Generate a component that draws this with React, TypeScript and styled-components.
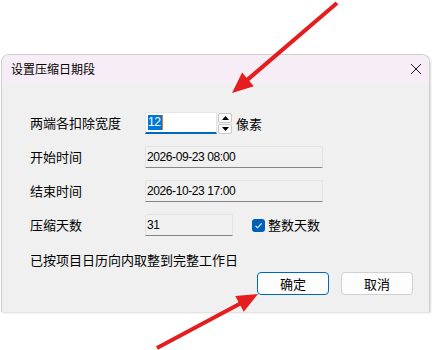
import React from 'react'
import styled, { createGlobalStyle } from 'styled-components'

const GlobalStyle = createGlobalStyle`
  html, body {
    margin: 0;
    padding: 0;
    background: #ffffff;
  }
  body {
    font-family: "Noto Sans CJK SC", "Liberation Sans", sans-serif;
    color: #000;
  }
`

const Page = styled.div`
  position: relative;
  width: 432px;
  height: 350px;
  padding-top: 54px;
  box-sizing: border-box;
  overflow: hidden;
`

const Dialog = styled.div`
  margin-left: 1px;
  width: 429px;
  border: 1px solid #cfcfcf;
  border-bottom: none;
  border-radius: 8px 8px 0 0;
  box-sizing: border-box;
  overflow: hidden;
  box-shadow: 1px 1px 2px rgba(0, 0, 0, 0.15);
`

const TitleBar = styled.div`
  height: 29px;
  background: #f6edf6;
  display: flex;
  align-items: center;
  justify-content: space-between;
  padding: 0 7px 0 9px;
  font-size: 12px;
  line-height: 16px;
  margin-top: -1px;
`

const Body = styled.div`
  background: #f0f0f0;
  padding: 29px 16px 16px 28px;
  height: 229px;
  box-sizing: border-box;
  display: flex;
  flex-direction: column;
`

const Row = styled.div`
  display: flex;
  align-items: center;
  height: 22px;
  margin-bottom: 12px;
`

const Label = styled.span`
  font-size: 13px;
  line-height: 18px;
  white-space: nowrap;
`

const RowLabel = styled(Label)`
  width: 115px;
  flex: none;
`

const Field = styled.div<{ $width: number }>`
  width: ${(p) => p.$width}px;
  height: 22px;
  box-sizing: border-box;
  border: 1px solid #e3e3e3;
  border-bottom-color: #868686;
  background: #f0f0f0;
  border-radius: 2px 2px 0 0;
  display: flex;
  align-items: center;
  padding-left: 1px;
  font-family: "Liberation Sans", sans-serif;
  font-size: 12px;
  letter-spacing: -0.4px;
`

const NumberInput = styled.div`
  width: 72px;
  height: 22px;
  box-sizing: border-box;
  background: #ffffff;
  border: 1px solid #e6e6e6;
  border-bottom: 2px solid #0067c0;
  display: flex;
  align-items: center;
  padding-left: 2px;
  font-family: "Liberation Sans", sans-serif;
  font-size: 12px;
  letter-spacing: -0.4px;
`

const Selection = styled.span`
  background: #0078d7;
  color: #ffffff;
  line-height: 15px;
  padding-right: 1px;
  border-right: 1px solid #e07a1e;
`

const SpinButtons = styled.div`
  display: flex;
  flex-direction: column;
  gap: 1px;
  margin-left: 1px;
`

const SpinButton = styled.div`
  width: 14px;
  height: 10px;
  box-sizing: border-box;
  border: 1px solid #c9c9c9;
  border-radius: 2px;
  background: #fbfbfb;
  display: flex;
  align-items: center;
  justify-content: center;
`

const Unit = styled.span`
  font-size: 13px;
  margin-left: 4px;
`

const CheckWrap = styled.div`
  display: flex;
  align-items: center;
  margin-left: 19px;
  gap: 3px;
`

const CheckBox = styled.div`
  width: 13px;
  height: 13px;
  border-radius: 3px;
  background: #005fb8;
  display: flex;
  align-items: center;
  justify-content: center;
`

const Note = styled.div`
  font-size: 13px;
  line-height: 18px;
  margin-top: 3px;
`

const Buttons = styled.div`
  display: flex;
  justify-content: flex-end;
  gap: 12px;
  margin-top: 3px;
`

const Button = styled.button<{ $primary?: boolean }>`
  width: 72px;
  height: 23px;
  box-sizing: border-box;
  border-radius: 4px;
  border: 1px solid ${(p) => (p.$primary ? '#0067c0' : '#d0d0d0')};
  background: #fdfdfd;
  font-family: "Noto Sans CJK SC", sans-serif;
  font-size: 13px;
  line-height: 16px;
  padding: 0;
  color: #000;
`

const Overlay = styled.svg`
  position: absolute;
  left: 0;
  top: 0;
  pointer-events: none;
`

const Arrow = ({ x1, y1, x2, y2 }: { x1: number; y1: number; x2: number; y2: number }) => {
  const dx = x2 - x1
  const dy = y2 - y1
  const len = Math.hypot(dx, dy)
  const ux = dx / len
  const uy = dy / len
  const headLen = 21
  const half = 9
  const bx = x2 - ux * headLen
  const by = y2 - uy * headLen
  const px = -uy
  const py = ux
  return (
    <g>
      <line x1={x1} y1={y1} x2={bx + ux * 2} y2={by + uy * 2} stroke="#e41e1e" strokeWidth={4} />
      <polygon
        points={`${x2},${y2} ${bx + px * half},${by + py * half} ${bx - px * half},${by - py * half}`}
        fill="#e41e1e"
      />
    </g>
  )
}

export default function App() {
  return (
    <>
      <GlobalStyle />
      <Page>
        <Dialog>
          <TitleBar>
            <span>设置压缩日期段</span>
            <svg width="12" height="12" viewBox="0 0 12 12">
              <path d="M1 1 L11 11 M11 1 L1 11" stroke="#1a1a1a" strokeWidth="1" />
            </svg>
          </TitleBar>
          <Body>
            <Row>
              <RowLabel>两端各扣除宽度</RowLabel>
              <NumberInput>
                <Selection>12</Selection>
              </NumberInput>
              <SpinButtons>
                <SpinButton>
                  <svg width="7" height="4" viewBox="0 0 7 4">
                    <path d="M3.5 0 L7 4 L0 4 Z" fill="#000" />
                  </svg>
                </SpinButton>
                <SpinButton>
                  <svg width="7" height="4" viewBox="0 0 7 4">
                    <path d="M0 0 L7 0 L3.5 4 Z" fill="#000" />
                  </svg>
                </SpinButton>
              </SpinButtons>
              <Unit>像素</Unit>
            </Row>
            <Row>
              <RowLabel>开始时间</RowLabel>
              <Field $width={178}>2026-09-23 08:00</Field>
            </Row>
            <Row>
              <RowLabel>结束时间</RowLabel>
              <Field $width={178}>2026-10-23 17:00</Field>
            </Row>
            <Row>
              <RowLabel>压缩天数</RowLabel>
              <Field $width={88}>31</Field>
              <CheckWrap>
                <CheckBox>
                  <svg width="9" height="9" viewBox="0 0 9 9">
                    <path d="M1.5 4.8 L3.6 6.8 L7.6 2.4" stroke="#fff" strokeWidth="1.1" fill="none" />
                  </svg>
                </CheckBox>
                <Label>整数天数</Label>
              </CheckWrap>
            </Row>
            <Note>已按项目日历向内取整到完整工作日</Note>
            <Buttons>
              <Button $primary>确定</Button>
              <Button>取消</Button>
            </Buttons>
          </Body>
        </Dialog>
        <Overlay width="432" height="350" viewBox="0 0 432 350">
          <Arrow x1={337} y1={3} x2={232} y2={93} />
          <Arrow x1={157} y1={348} x2={258} y2={294} />
        </Overlay>
      </Page>
    </>
  )
}
